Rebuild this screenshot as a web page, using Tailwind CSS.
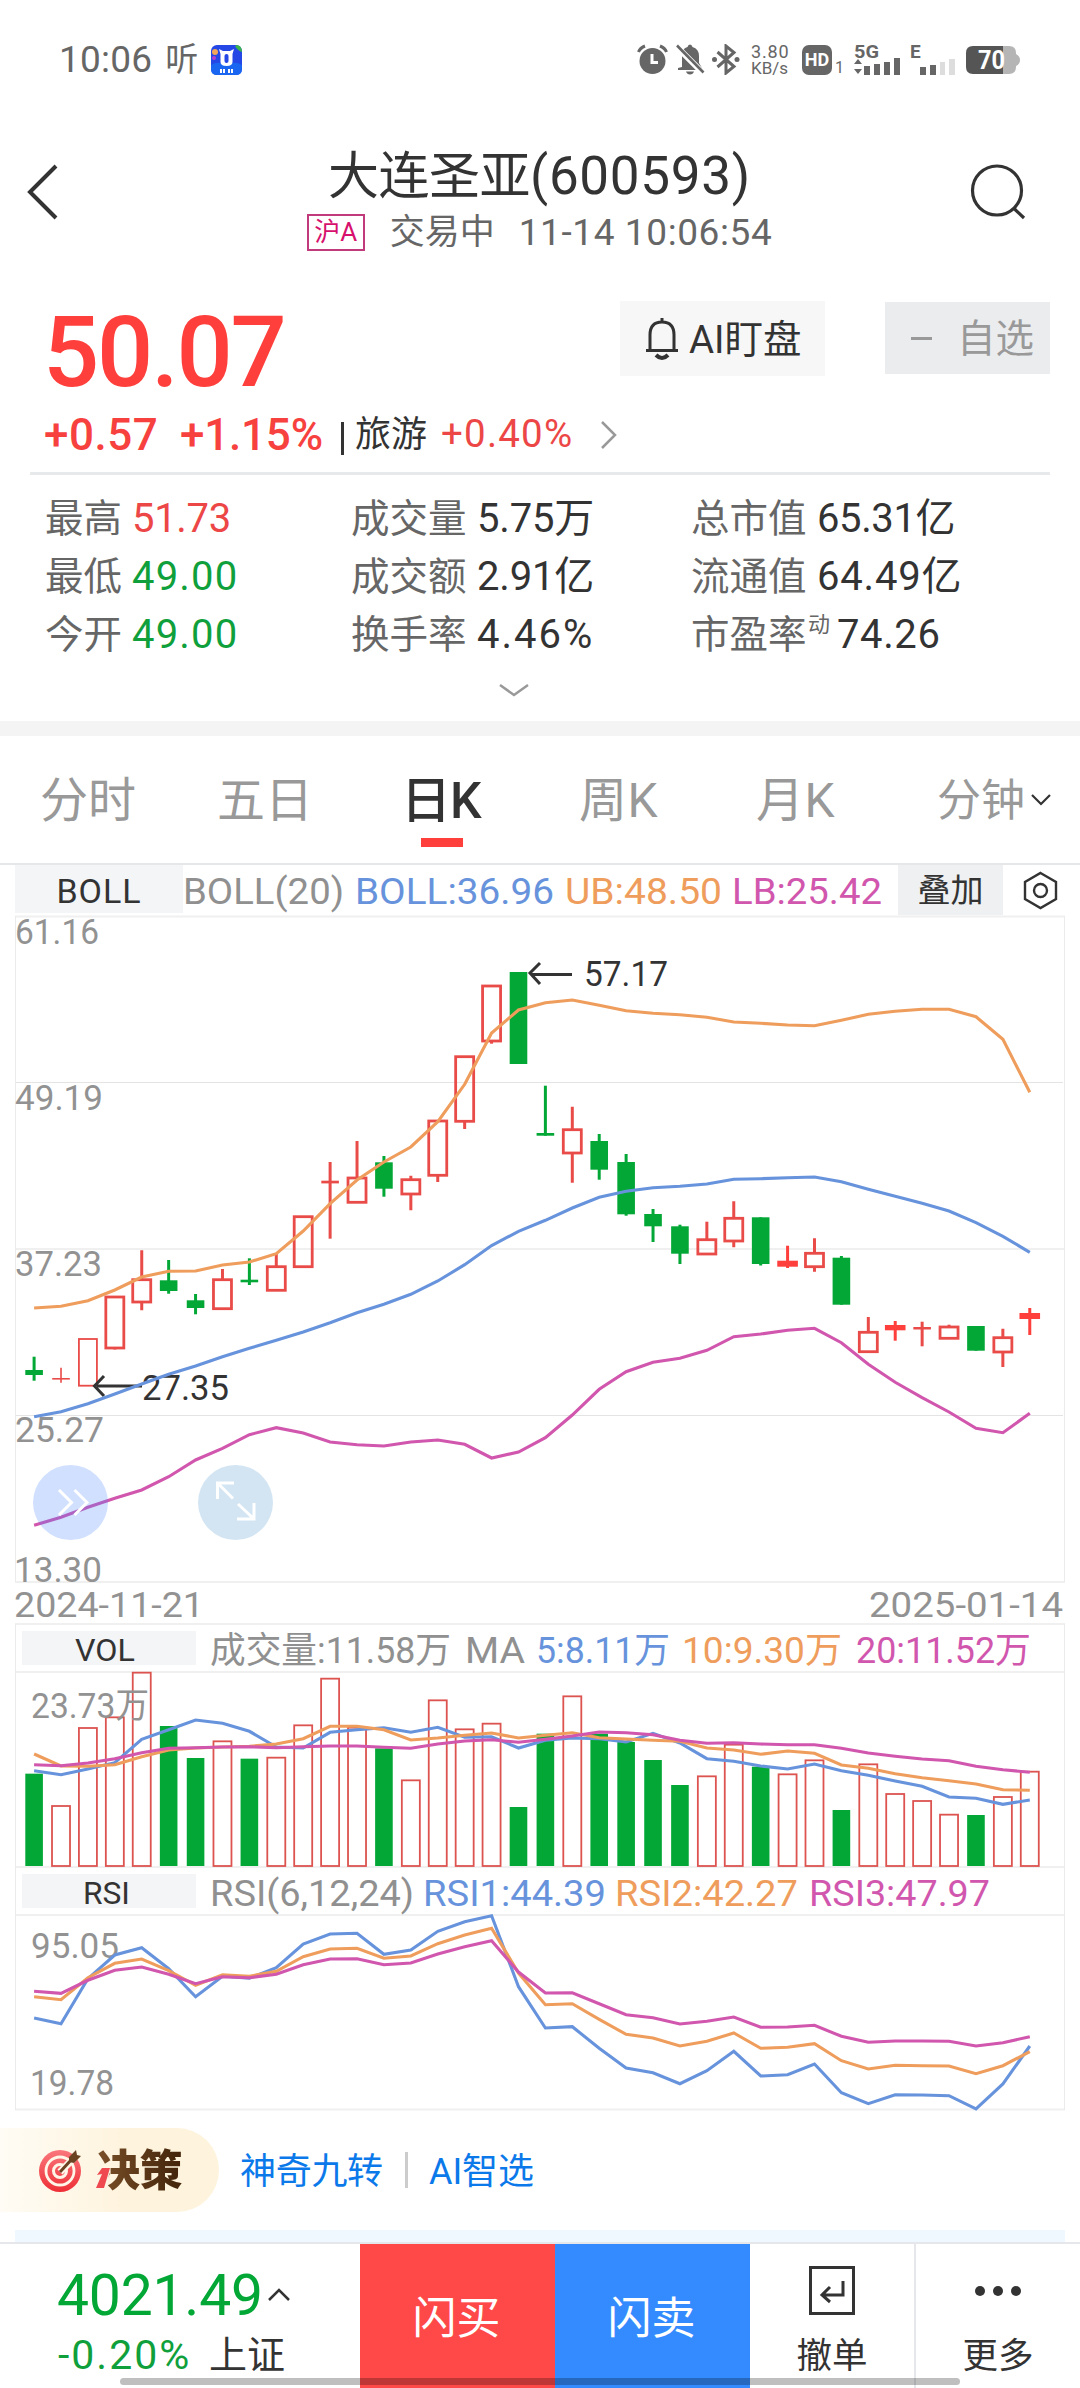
<!DOCTYPE html>
<html lang="zh-CN">
<head>
<meta charset="utf-8">
<title>大连圣亚(600593)</title>
<script src="https://cdn.jsdelivr.net/npm/@tailwindcss/browser@4"></script>
</head>
<body class="bg-white">
<div class="relative flex h-[2388px] w-[1080px] flex-col overflow-hidden bg-white font-['Roboto','Noto_Sans_CJK_SC',sans-serif] text-[#333]">

  <!-- status bar -->
  <header class="flex h-[119px] shrink-0 items-center justify-between pr-[60px] pl-[59px] text-[#666]">
    <div class="flex items-center">
      <span class="text-[37px] leading-none tracking-[0.200px]">10:06</span>
      <span class="ml-[13px] text-[33px] leading-none">听</span>
      <svg class="ml-[13px]" width="31" height="30" viewBox="0 0 31 30">
        <rect width="31" height="30" rx="6" fill="#2547e6"/>
        <path d="M0 20Q8 15 15 21Q23 15 31 20V24Q31 30 25 30H6Q0 30 0 24Z" fill="#1a66f0"/>
        <path d="M26 0Q31 1 31 7Q27 6 24 1Z" fill="#3cb54a"/>
        <circle cx="4" cy="7" r="3" fill="#f2a65a"/><circle cx="3" cy="13" r="2" fill="#b23fd0"/>
        <path d="M8 4L12 6H19L23 4L21.500 9V17Q21.500 21 15.500 21Q9.500 21 9.500 17V9Z" fill="#fff"/>
        <rect x="13.500" y="9" width="4" height="9" rx="2" fill="#2547e6"/>
        <path d="M9 24h2v4h-2zM12 24h2v4h-2zM17 24h2v4h-2zM20 24h2v4h-2z" fill="#fff"/>
      </svg>
    </div>
    <div class="flex items-center">
      <svg width="31" height="31" viewBox="0 0 31 31" fill="none">
        <circle cx="15.500" cy="17" r="13" fill="#666"/>
        <path d="M15 10V18.500H21" stroke="#fff" stroke-width="3"/>
        <path d="M1.500 8Q3 4 8 2M29.500 8Q28 4 23 2" stroke="#666" stroke-width="3"/>
      </svg>
      <svg class="ml-[7px]" width="30" height="31" viewBox="0 0 30 31">
        <path d="M7 23V12Q7 4 12.500 3Q13 0.500 15 0.500T17.500 3Q24 5 24 12V19L27 24V26H3V24ZM11 27.500H19Q18 30.500 15 30.500T11 27.500Z" fill="#666"/>
        <path d="M1 2L28 29" stroke="#fff" stroke-width="6"/><path d="M2 1.500L28.500 28.500" stroke="#666" stroke-width="2.600"/>
      </svg>
      <svg class="ml-[7px]" width="28" height="31" viewBox="0 0 28 31" fill="none" stroke="#666" stroke-width="3">
        <path d="M5.500 8L22 22.500L14 29V2L22 8.500L5.500 23"/><circle cx="2.500" cy="15.500" r="2.500" fill="#666" stroke="none"/><circle cx="25" cy="15.500" r="2.500" fill="#666" stroke="none"/>
      </svg>
      <div class="ml-[11px] flex w-[40px] flex-col leading-[16px]"><span class="text-[18px] tracking-[0.800px]">3.80</span><span class="text-[17px]">KB/s</span></div>
      <div class="ml-[11px] flex h-[30px] w-[30px] items-center justify-center rounded-[7px] bg-[#666] text-[18px] leading-none font-bold text-white">HD</div>
      <span class="ml-[3px] mt-[16px] text-[16px] leading-none">1</span>
      <svg class="ml-[9px] overflow-visible" width="50" height="31" viewBox="0 0 50 31">
        <text x="1" y="14" font-size="19" font-weight="700" fill="#666" textLength="25">5G</text>
        <path d="M5 15L9 20H1ZM5 30L9 25H1Z" fill="#666"/>
        <path d="M11 22h6v9h-6zM21 20h6v11h-6zM31 18h6v13h-6zM41 14h6v17h-6z" fill="#666"/>
      </svg>
      <svg class="ml-[7px] overflow-visible" width="46" height="31" viewBox="0 0 46 31">
        <text x="0" y="14" font-size="19" font-weight="700" fill="#666">E</text>
        <path d="M10 23h6v8h-6zM20 21h6v10h-6z" fill="#666"/><path d="M30 18h5v13h-5zM39 15h6v16h-6z" fill="#ddd"/>
      </svg>
      <svg class="ml-[10px] overflow-visible" width="54" height="28" viewBox="0 0 54 28">
        <path d="M36 0H43Q50 0 50 7V8Q54 10 54 14T50 20V21Q50 28 43 28H36Z" fill="#b5b5b5"/>
        <path d="M37 0H7Q0 0 0 7V21Q0 28 7 28H37Z" fill="#555"/>
        <text x="12" y="23" font-size="25" font-weight="700" fill="#fff" textLength="27">70</text>
      </svg>
    </div>
  </header>

  <!-- title bar -->
  <section class="flex h-[161px] shrink-0 items-start justify-between pr-[50px] pl-[24px]">
    <svg class="mt-[43px]" width="40" height="60" viewBox="0 0 40 60" fill="none" stroke="#333" stroke-width="4"><path d="M32 4L6 30L32 56"/></svg>
    <div class="ml-[45px] flex flex-col items-center">
      <h1 class="mt-[29px] flex h-[56px] items-center text-[53px] leading-none"><span class="text-[51px] tracking-[-0.500px]">大连圣亚</span><span class="tracking-[0.700px]">(600593)</span></h1>
      <div class="mt-[9px] flex h-[38px] items-center text-[37px] leading-none text-[#666]">
        <span class="flex h-[37px] w-[58px] items-center justify-center border-2 border-[#c03a7c] text-[26px] text-[#d6106c]">沪A</span>
        <span class="ml-[25px] text-[35px]">交易中</span>
        <span class="ml-[24px] tracking-[0.600px]">11-14 10:06:54</span>
      </div>
    </div>
    <svg class="mt-[43px]" width="60" height="60" viewBox="0 0 60 60" fill="none" stroke="#333" stroke-width="3.200"><circle cx="27" cy="28.500" r="24.500"/><path d="M43.500 46L54 56"/></svg>
  </section>

  <!-- quote -->
  <section class="flex h-[441px] shrink-0 flex-col">
    <div class="flex h-[124px] items-start pl-[43px]">
      <span class="mt-[22px] w-[577px] text-[99px] leading-[100px] font-medium tracking-[-2.200px] text-[#ff3f3c]">50.07</span>
      <div class="mt-[21px] flex h-[75px] w-[205px] items-center bg-[#f7f7f7] pl-[24px]">
        <svg width="36" height="44" viewBox="0 0 36 44" fill="none" stroke="#333" stroke-width="3"><path d="M18 1V5M2 33.500H34M6 33V18Q6 5 18 5T30 18V33"/><path d="M12 38Q18 44 24 38" stroke-width="4"/></svg>
        <span class="mt-[3px] ml-[9px] text-[38.500px] leading-none whitespace-nowrap">AI盯盘</span>
      </div>
      <div class="mt-[22px] ml-[60px] flex h-[72px] w-[165px] items-center bg-[#ebecee] pl-[26px] text-[38.500px] leading-none text-[#999]">
        <i class="h-[3px] w-[21px] bg-[#999]"></i><span class="mt-[3px] ml-[25px]">自选</span>
      </div>
    </div>
    <div class="flex h-[68px] items-center pb-[7px] pl-[44px] pt-0 leading-none text-[#ec4746]">
      <span class="w-[136px] text-[44px] font-medium tracking-[0.500px] text-[#f7413f]">+0.57</span>
      <span class="w-[161px] text-[44px] font-medium tracking-[-0.200px] text-[#f7413f]">+1.15%</span>
      <i class="mt-[8px] h-[33px] w-[3px] bg-[#333]"></i>
      <span class="ml-[11px] text-[36px] text-[#333]">旅游</span>
      <span class="ml-[14px] w-[144px] text-[38.500px] tracking-[1.200px]">+0.40%</span>
      <svg class="ml-[15px]" width="18" height="30" viewBox="0 0 18 30" fill="none" stroke="#999" stroke-width="2.500"><path d="M2 2L15 15L2 28"/></svg>
    </div>
    <i class="mx-[30px] h-[3px] bg-[#e8e9eb]"></i>
    <div class="grid grid-cols-[306px_340px_1fr] grid-rows-[58px_58px_58px] items-center pt-[15px] pl-[45px] text-[40px] leading-none">
      <div class="flex items-center"><span class="w-[87px] text-[38.500px] text-[#666]">最高</span><span class="tracking-[-0.300px] text-[#ec4746]">51.73</span></div>
      <div class="flex items-center"><span class="w-[126px] text-[38.500px] text-[#666]">成交量</span><span class="tracking-[-0.200px]">5.75万</span></div>
      <div class="flex items-center"><span class="w-[126px] text-[38.500px] text-[#666]">总市值</span><span class="tracking-[-0.400px]">65.31亿</span></div>
      <div class="flex items-center"><span class="w-[87px] text-[38.500px] text-[#666]">最低</span><span class="tracking-[1.200px] text-[#0fa03c]">49.00</span></div>
      <div class="flex items-center"><span class="w-[126px] text-[38.500px] text-[#666]">成交额</span><span class="tracking-[-0.200px]">2.91亿</span></div>
      <div class="flex items-center"><span class="w-[126px] text-[38.500px] text-[#666]">流通值</span><span class="tracking-[0.800px]">64.49亿</span></div>
      <div class="flex items-center"><span class="w-[87px] text-[38.500px] text-[#666]">今开</span><span class="tracking-[1.200px] text-[#0fa03c]">49.00</span></div>
      <div class="flex items-center"><span class="w-[126px] text-[38.500px] text-[#666]">换手率</span><span class="tracking-[2px]">4.46%</span></div>
      <div class="flex items-center"><span class="w-[117px] text-[38.500px] text-[#666]">市盈率</span><span class="mb-[20px] w-[29px] text-[22px] text-[#666]">动</span><span class="tracking-[0.600px]">74.26</span></div>
    </div>
    <svg class="mt-[18px] ml-[499px]" width="30" height="16" viewBox="0 0 30 16" fill="none" stroke="#999" stroke-width="2.500"><path d="M1 3L15 13L29 3"/></svg>
  </section>
  <div class="h-[15px] shrink-0 bg-[#f4f4f4]"></div>

  <!-- period tabs -->
  <nav class="flex h-[129px] shrink-0 items-start border-b-2 border-[#e6e7e9] pl-[40px] text-[48px] leading-[56px] text-[#999]">
    <span class="mt-[37px] w-[177px]">分时</span>
    <span class="mt-[37px] w-[186px]">五日</span>
    <div class="mt-[37px] flex w-[176px] flex-col text-[#333]"><span class="ml-[-2px] text-[50px] font-medium tracking-[-1px]">日K</span><i class="mt-[9px] ml-[18px] h-[9px] w-[42px] bg-[#ff3f3c]"></i></div>
    <span class="mt-[37px] w-[177px] tracking-[0.500px]">周K</span>
    <span class="mt-[37px] w-[181px] tracking-[0.500px]">月K</span>
    <span class="mt-[37px] text-[44px]">分钟</span>
    <svg class="mt-[57px] ml-[5px]" width="22" height="14" viewBox="0 0 22 14" fill="none" stroke="#333" stroke-width="2.200"><path d="M2 2L11 11L20 2"/></svg>
  </nav>

  <!-- overlay indicator row -->
  <section class="flex h-[50px] shrink-0 items-start pl-[15px]">
    <div class="flex h-[48px] w-[168px] items-center justify-center bg-[#f4f5f7] pt-[3px] text-[34px] leading-none tracking-[1px] text-[#333]">BOLL</div>
    <svg class="h-[50px] w-[715px] overflow-visible" viewBox="183 865 715 50" font-size="36">
      <text x="183" y="904" fill="#909090" textLength="161">BOLL(20)</text>
      <text x="355" y="904" fill="#6793dc" textLength="199">BOLL:36.96</text>
      <text x="565" y="904" fill="#ef9d5c" textLength="157">UB:48.50</text>
      <text x="732" y="904" fill="#d156ad" textLength="150">LB:25.42</text>
    </svg>
    <div class="flex h-[50px] w-[105px] items-center justify-center bg-[#eff0f2] text-[33px] leading-none">叠加</div>
    <svg class="ml-[19px]" width="38" height="50" viewBox="1022 865 38 50" fill="none" stroke="#333" stroke-width="2.400"><path d="M1040.500 873L1056 882V899L1040.500 908L1025 899V882Z"/><circle cx="1040.500" cy="890.500" r="6.500"/></svg>
  </section>

  <!-- candlestick, volume and RSI plots share one coordinate space -->
  <svg id="plots" class="block h-[1196px] w-[1080px] shrink-0 overflow-visible" viewBox="0 914 1080 1196" fill="none" font-size="35">
    <g id="grid" stroke="#f0f0f0" stroke-width="2"></g>
    <g id="vol"></g>
    <g fill="#929292">
      <text x="15" y="943" textLength="84">61.16</text>
      <text x="15" y="1109" textLength="88">49.19</text>
      <text x="15" y="1275" textLength="87">37.23</text>
      <text x="15" y="1441" textLength="89">25.27</text>
      <text x="14" y="1581" textLength="88">13.30</text>
      <text x="14" y="1616" textLength="190">2024-11-21</text>
      <text x="869" y="1616" textLength="194">2025-01-14</text>
      <text x="31" y="1717" textLength="118">23.73万</text>
      <text x="31" y="1957" textLength="88">95.05</text>
      <text x="30" y="2094" textLength="84">19.78</text>
    </g>
    <rect x="22" y="1630" width="174" height="34" fill="#f4f5f7"/>
    <rect x="22" y="1873" width="174" height="34" fill="#f4f5f7"/>
    <g fill="#333" font-size="31">
      <text x="75" y="1660" textLength="60">VOL</text>
      <text x="83" y="1903" textLength="47">RSI</text>
      <text x="584" y="985" font-size="35" textLength="84">57.17</text>
      <text x="142" y="1399" font-size="35" textLength="87">27.35</text>
    </g>
    <g font-size="36.500">
      <text x="210" y="1662" fill="#909090" textLength="241">成交量:11.58万</text>
      <text x="465" y="1662" fill="#909090" textLength="60">MA</text>
      <text x="536" y="1662" fill="#6793dc" textLength="134">5:8.11万</text>
      <text x="682" y="1662" fill="#ef9d5c" textLength="160">10:9.30万</text>
      <text x="856" y="1662" fill="#d156ad" textLength="175">20:11.52万</text>
      <text x="210" y="1905" fill="#909090" textLength="204">RSI(6,12,24)</text>
      <text x="423" y="1905" fill="#6793dc" textLength="183">RSI1:44.39</text>
      <text x="615" y="1905" fill="#ef9d5c" textLength="183">RSI2:42.27</text>
      <text x="809" y="1905" fill="#d156ad" textLength="181">RSI3:47.97</text>
    </g>
    <g id="candles"></g>
    <g stroke="#333" stroke-width="3"><path d="M572 973.500H532M540 962L530 972L540 983"/><path d="M142 1385H97M104 1375L94.500 1385L104 1395"/></g>
    <g id="lines" stroke-width="3.100"></g>
    <circle cx="70.500" cy="1501.500" r="37.500" fill="#4d88ff" fill-opacity="0.260"/>
    <circle cx="235.500" cy="1501.500" r="37.500" fill="#2f83c7" fill-opacity="0.210"/>
    <g stroke="#fff" stroke-width="3"><path d="M59 1489L71.500 1501.500L59 1514M74.500 1489L87 1501.500L74.500 1514"/><path d="M234 1482H217.500V1498M217.500 1482L233 1497.500M237 1518H254V1502M254 1518L238 1503"/></g>
  </svg>

  <!-- strategy links -->
  <section class="flex h-[119px] shrink-0 items-start pt-[17px] text-[36px] leading-none text-[#0b79ea]">
    <div class="flex h-[84px] w-[219px] items-center rounded-r-full bg-linear-to-r from-[#fffcf5] to-[#fef3dc] to-60% pl-[38px]">
      <svg width="46" height="46" viewBox="0 0 46 46" fill="none">
        <defs><linearGradient id="tg" x1="0" y1="0" x2="0" y2="1"><stop offset="0" stop-color="#f9777c"/><stop offset="1" stop-color="#ee2f36"/></linearGradient></defs>
        <circle cx="22" cy="24" r="21" fill="url(#tg)"/><circle cx="22" cy="24" r="14" stroke="#fff6e8" stroke-width="2.800"/><circle cx="22" cy="24" r="6.500" stroke="#fff6e8" stroke-width="3"/>
        <path d="M22 25L36 11" stroke="#fff6e8" stroke-width="7"/>
        <path d="M22 25L34 12" stroke="#6b4322" stroke-width="3"/><path d="M31 10L38 3L39 8L43 9L36 16L31 15Z" fill="#6b4322"/>
      </svg>
      <div class="relative mt-[2px] ml-[13px] flex">
        <span class="bg-linear-to-r from-[#7a5029] to-[#43240a] bg-clip-text text-[43px] leading-[46px] font-black tracking-[-0.500px] text-transparent">决策</span>
        <svg class="absolute top-[19px] left-[-2px]" width="15" height="23" viewBox="0 0 15 23"><path d="M0 0H15L12 23H0Z" fill="#fef6e5"/><path d="M7 1H15L9 21H1L7 7L2 8Z" fill="#ee4a50"/></svg>
      </div>
    </div>
    <span class="mt-[26px] ml-[21px] w-[165px] tracking-[-0.300px]">神奇九转</span>
    <i class="mt-[24px] h-[36px] w-[3px] bg-[#ccc]"></i>
    <span class="mt-[26px] ml-[21px] tracking-[-0.100px]">AI智选</span>
  </section>
  <div class="mx-[15px] h-[12px] shrink-0 bg-[#eff7ff]"></div>

  <!-- trade bar -->
  <footer class="flex h-[147px] shrink-0 border-t-2 border-[#e6e7ea] leading-none">
    <div class="flex w-[360px] flex-col pl-[57px]">
      <div class="mt-[21px] flex h-[60px] items-center text-[#02a736]"><span class="w-[208px] text-[57px] tracking-[-0.200px]">4021.49</span>
        <svg class="ml-[3px]" width="22" height="14" viewBox="0 0 22 14" fill="none" stroke="#333" stroke-width="2.500"><path d="M1 12L11 2L21 12"/></svg></div>
      <div class="mt-[10px] flex h-[40px] items-center text-[41px]"><span class="w-[152px] pl-px tracking-[2px] text-[#0fa03c]">-0.20%</span><span class="text-[38px]">上证</span></div>
    </div>
    <div class="flex w-[195px] items-center justify-center bg-[#ff4848] pt-[5px] pr-[2px] text-[44px] text-white">闪买</div>
    <div class="flex w-[195px] items-center justify-center bg-[#348bff] pt-[5px] pr-[2px] text-[44px] text-white">闪卖</div>
    <div class="flex w-[166px] flex-col items-center border-r-2 border-[#e6e7ea] text-[35.500px]">
      <svg class="mt-[22px]" width="46" height="50" viewBox="0 0 46 50" fill="none" stroke="#333" stroke-width="3"><rect x="1.500" y="1.500" width="43" height="46"/><path d="M34 15V29H14M21 21L13 29L21 36"/></svg>
      <span class="mt-[23px]">撤单</span>
    </div>
    <div class="flex w-[164px] flex-col items-center text-[35.500px]">
      <svg class="mt-[22px]" width="50" height="50" viewBox="0 0 50 50" fill="#333"><circle cx="7" cy="25" r="5"/><circle cx="25" cy="25" r="5"/><circle cx="43" cy="25" r="5"/></svg>
      <span class="mt-[23px]">更多</span>
    </div>
  </footer>
  <div class="absolute bottom-[3px] left-[120px] h-[7px] w-[840px] rounded-full bg-black/25"></div>
</div>

<script>
const X = i => 34.1 + 26.91 * i;
const NS = 'http://www.w3.org/2000/svg';
const add = (id, tag, attrs) => {
  const el = document.createElementNS(NS, tag);
  for (const k in attrs) el.setAttribute(k, attrs[k]);
  document.getElementById(id).appendChild(el);
};
const RED = '#e94b48', SOLID = '#ff3f3c', GREEN = '#02a736';

// labels stretch their glyphs, not only the gaps, to the given length
document.querySelectorAll('text[textLength]').forEach(t => t.setAttribute('lengthAdjust', 'spacingAndGlyphs'));

[915.5, 1248, 1581, 1623, 1671, 1866, 1914, 2108.5].forEach(y => add('grid', 'path', { d: `M15 ${y}H1065` }));
[1081.5, 1414.5].forEach(y => add('grid', 'path', { d: `M15 ${y}H1063`, stroke: '#e4e4e4', 'stroke-width': 1 }));
[[915, 1581], [1623, 2109]].forEach(([a, b]) => [15.5, 1064.5].forEach(x => add('grid', 'path', { d: `M${x} ${a}V${b}`, stroke: '#ebebeb', 'stroke-width': 1 })));

// [kind, high, body top, body bottom, low]
// g falling, r rising (hollow), h rising (hairline), s/S flat bar, t hairline cross
const candles = [
  ['g',1355.7,1369,1374,1379.7],['t',1366.7,1377,1378.6,1381.7],['h',1338,1338,1384.7,1384.7],['r',1296,1296,1347,1348.5],
  ['r',1249.3,1278.7,1301,1309.3],['g',1259,1279.3,1290,1292.7],['g',1293,1299.3,1307,1313.3],['r',1268,1278.7,1307.7,1307.7],
  ['g',1257.3,1278.7,1281.3,1284],['r',1252.7,1265.7,1289.3,1289.3],['r',1215.7,1215.7,1265.7,1265.7],['s',1161,1179.7,1182.4,1237.7],
  ['r',1140,1177,1201.3,1201.3],['g',1155,1161.3,1187.7,1195.7],['r',1174.7,1178.7,1193,1209.3],['r',1120,1120,1174.3,1181],
  ['r',1055.7,1055.7,1120.3,1128],['r',985,985,1040,1042.7],['g',971,971,1063,1063],['g',1084.7,1132,1134.7,1134.7],
  ['r',1105.7,1128.7,1152,1181.7],['g',1133,1140,1168.7,1178.7],['g',1153,1161,1213.3,1214.7],['g',1208,1213,1225.3,1241],
  ['g',1223.7,1225.3,1252.7,1263],['r',1220.7,1238.7,1253,1253],['r',1200.3,1217.3,1240,1246.3],['g',1216.3,1216.3,1263,1264.5],
  ['S',1244.7,1259.7,1265.7,1267],['r',1237.3,1252.3,1265.7,1270.7],['g',1255,1256.7,1303.7,1303.7],['r',1316,1331.3,1350.7,1350.7],
  ['S',1320,1324,1329.3,1339.7],['s',1320.7,1326,1328.5,1345.3],['r',1323.7,1326,1337.3,1337.3],['g',1325,1325,1349.7,1349.7],
  ['r',1327.7,1336.7,1351,1366],['S',1307,1312,1318,1334]
];
candles.forEach(([k, hi, t, b, lo], i) => {
  const x = X(i), color = k === 'g' ? GREEN : k === 'S' ? SOLID : RED;
  const wick = k === 't' ? 1.6 : 3;
  if (k === 'r' || k === 'h') {
    const w = k === 'h' ? 1.8 : 2.8;
    add('candles', 'path', { d: `M${x} ${hi}V${t}M${x} ${b}V${lo}`, stroke: RED, 'stroke-width': 3 });
    add('candles', 'rect', { x: x - 9, y: t, width: 18, height: b - t, stroke: RED, 'stroke-width': w });
  } else {
    add('candles', 'path', { d: `M${x} ${hi}V${lo}`, stroke: color, 'stroke-width': wick });
    const w = k === 'S' ? 20.6 : 17.6;
    add('candles', 'rect', { x: x - w / 2, y: t, width: w, height: b - t, fill: color });
  }
});

const volumes = [488,585,351,319,185,345,441,391,443,440,343,203,350,412,508,268,355,338,588,368,256,368,393,447,522,496,401,467,490,448,597,460,549,570,611,612,558,482];
const falling = new Set([0,5,6,8,13,18,19,21,22,23,24,27,30,35]);
volumes.forEach((v, i) => {
  const y = 1610 + v / 3;
  if (falling.has(i)) add('vol', 'rect', { x: X(i) - 8.8, y, width: 17.6, height: 1865 - y, fill: GREEN });
  else add('vol', 'rect', { x: X(i) - 9, y, width: 18, height: 1865 - y, stroke: '#dc5350', 'stroke-width': 1.8 });
});

const BLUE = '#6793dc', ORANGE = '#ef9d5c', PINK = '#d156ad';
const line = (color, ys, base = 0, k = 1) => add('lines', 'polyline', { stroke: color, points: ys.map((v, i) => `${X(i).toFixed(1)},${(base + v * k).toFixed(1)}`).join(' ') });
line(ORANGE, [1307,1305.3,1299.7,1289,1276,1270.3,1270,1264,1261,1252.7,1230,1202.7,1179,1161,1146,1120.7,1083.3,1032,1009,1001.7,999,1004.3,1009.7,1012.3,1013.7,1016.3,1021,1022.3,1024,1024.7,1019.3,1013.3,1010.3,1008.3,1008.3,1015.7,1038.3,1091.3]);
line(BLUE, [1415.7,1410.7,1402.7,1393,1383,1373.3,1365,1355.7,1347.3,1339.3,1331,1321.7,1311.7,1303.3,1293.3,1280,1263.7,1244.6,1230.3,1219.3,1207,1196.3,1190.3,1186.7,1185.3,1183,1178.3,1177.7,1176.7,1176,1180.7,1188.3,1195.3,1202.3,1210,1221.7,1235.3,1251.3]);
line(PINK, [1524.3,1516.3,1506.3,1497.3,1489,1475.7,1459,1447.3,1433.7,1426.7,1432,1441,1443.7,1445,1441,1439,1443.3,1457,1451,1436.7,1414,1388.3,1370.7,1361.3,1357.3,1349.3,1335.7,1333,1329.3,1327.3,1341.7,1363.3,1381.3,1396.7,1411,1427.3,1431.7,1412.3]);
line(BLUE, [479,491,474,455,385,356,327,337,361,408,411,364,356,350,364,349,379,377,411,388,381,383,393,367,396,443,451,465,474,459,479,493,510,526,558,562,580,567], 1610, 1/3);
line(ORANGE, [429,465,466,461,437,417,411,408,406,399,383,346,346,356,387,381,373,366,381,373,365,380,384,388,391,411,417,430,420,427,462,472,488,500,509,519,536,538], 1610, 1/3);
line(PINK, [461,464,456,443,425,412,410,408,407,410,407,405,405,409,412,399,390,386,394,385,375,363,365,371,388,397,395,399,401,401,412,426,436,444,449,466,476,484], 1610, 1/3);
line(BLUE, [441,458,323,252,230,293,377,316,322,290,219,189,187,250,237,181,152,134,347,471,467,532,591,605,638,599,541,615,611,579,665,698,671,672,674,714,639,525], 1870, 1/3);
line(ORANGE, [377,386,320,277,264,299,343,311,316,301,257,234,232,262,255,218,192,172,306,401,398,445,490,501,525,511,486,532,529,518,569,594,583,584,585,608,584,542], 1870, 1/3);
line(PINK, [361,367,328,298,288,310,338,317,320,310,281,264,263,281,276,249,227,209,303,366,365,398,431,440,459,451,438,469,468,463,496,514,510,510,511,525,515,497], 1870, 1/3);
</script>
</body>
</html>
